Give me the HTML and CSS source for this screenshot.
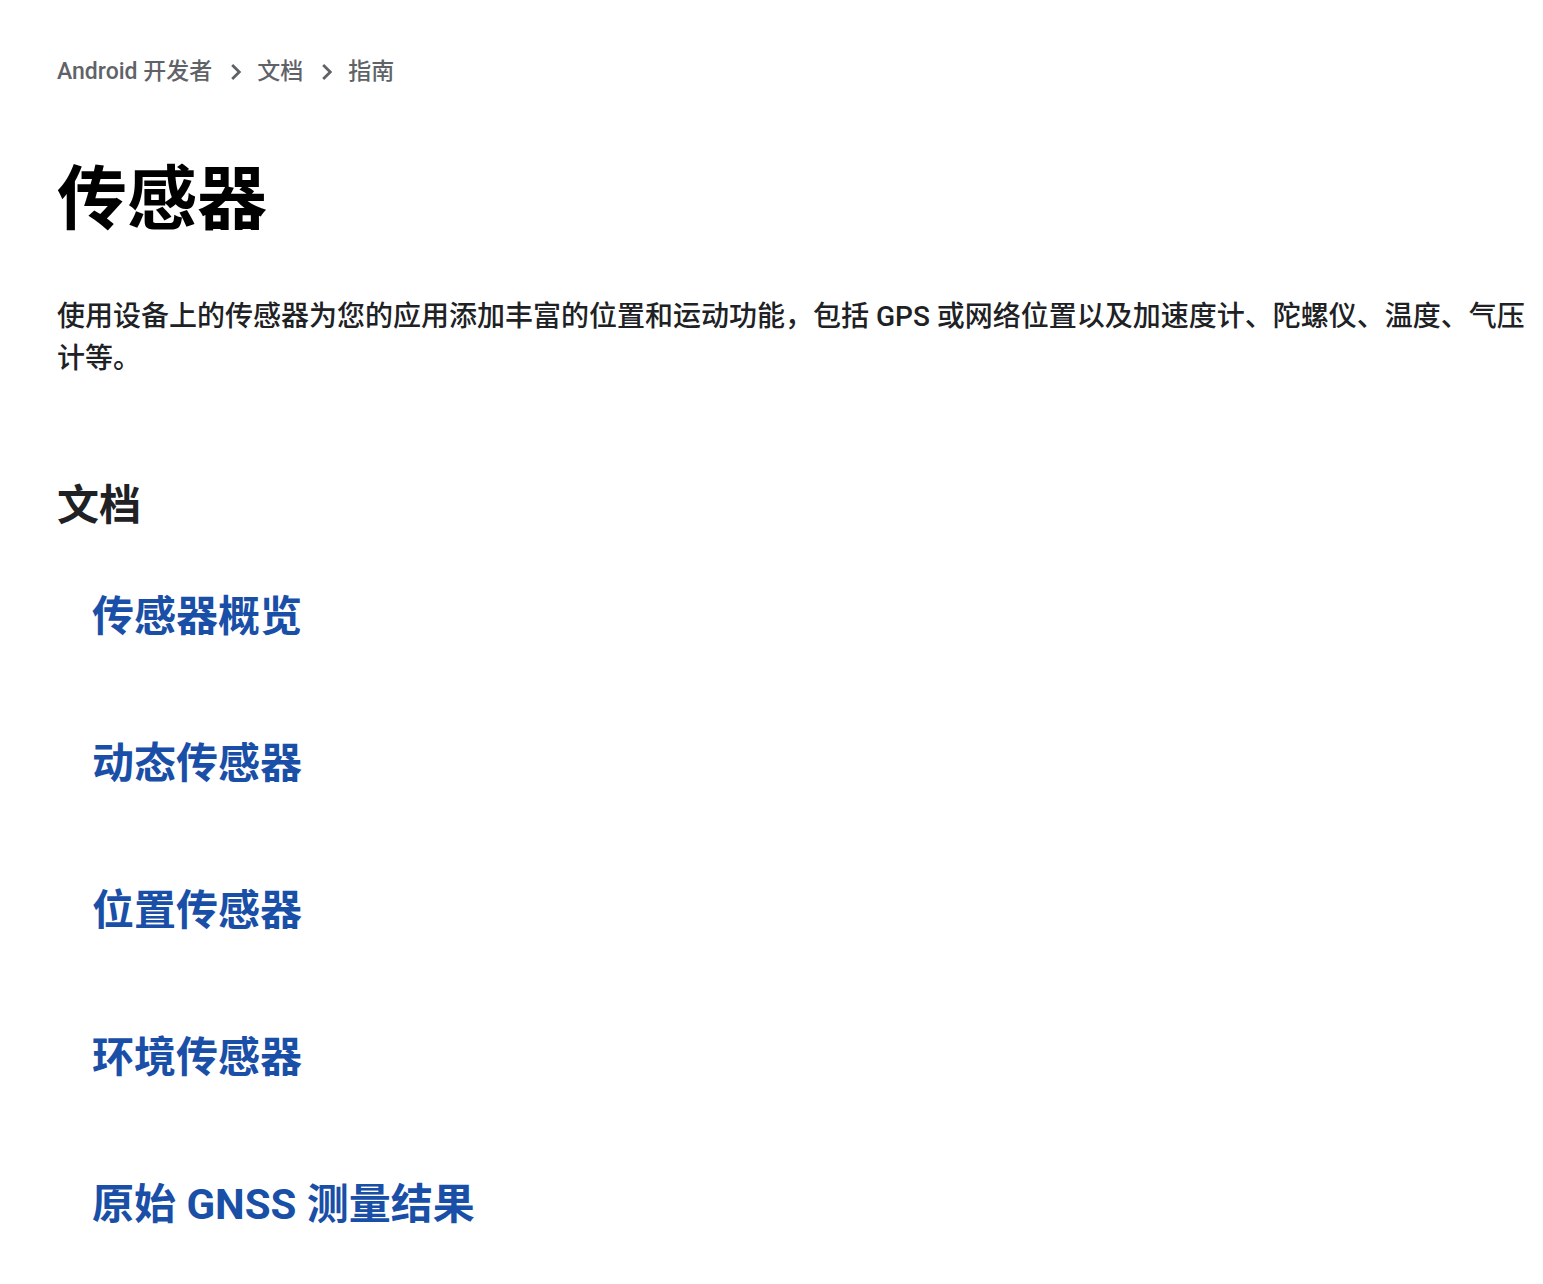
FILE: index.html
```html
<!DOCTYPE html>
<html lang="zh-CN">
<head>
  <meta charset="UTF-8">
  <title>传感器 | Android 开发者</title>
  <link rel="stylesheet" href="styles.css">
</head>
<body>
  <nav class="breadcrumb">
    <a href="#">Android 开发者</a>
    <svg class="chev" viewBox="0 0 24 24"><path d="M9.3 6.3 7.9 7.7 12.2 12l-4.3 4.3 1.4 1.4L15 12z"/></svg>
    <a href="#">文档</a>
    <svg class="chev" viewBox="0 0 24 24"><path d="M9.3 6.3 7.9 7.7 12.2 12l-4.3 4.3 1.4 1.4L15 12z"/></svg>
    <a href="#">指南</a>
  </nav>

  <h1 class="title">传感器</h1>

  <p class="intro">使用设备上的传感器为您的应用添加丰富的位置和运动功能，包括 GPS 或网络位置以及加速度计、陀螺仪、温度、气压计等。</p>

  <h2 class="section">文档</h2>

  <ul class="docs">
    <li><a href="#">传感器概览</a></li>
    <li><a href="#">动态传感器</a></li>
    <li><a href="#">位置传感器</a></li>
    <li><a href="#">环境传感器</a></li>
    <li><a href="#">原始 GNSS 测量结果</a></li>
  </ul>
</body>
</html>
```

FILE: styles.css
```css
* { margin: 0; padding: 0; box-sizing: border-box; }
body {
  font-family: Roboto, "Noto Sans CJK SC", sans-serif;
  background: #fff;
  color: #202124;
  padding: 55px 16px 40px 57px;
}
a { text-decoration: none; }

.breadcrumb {
  display: flex;
  align-items: center;
  font-size: 23px;
  font-weight: 500;
  line-height: 32px;
}
.breadcrumb a { color: #5f6368; }
.chev {
  fill: #5f6368;
  width: 34px;
  height: 34px;
  margin: 0 3px 0 8px;
}

.title {
  font-size: 70px;
  font-weight: 700;
  line-height: 1.2;
  color: #000;
  margin-top: 69px;
}

.intro {
  font-size: 28px;
  font-weight: 500;
  line-height: 42px;
  margin-top: 54px;
  color: #202124;
}

.section {
  font-size: 42px;
  font-weight: 700;
  line-height: 1.2;
  margin-top: 101px;
}

.docs { list-style: none; margin-top: 61px; padding-left: 35px; }
.docs li { height: 147px; }
.docs a {
  color: #1a4fa8;
  font-size: 42px;
  font-weight: 700;
  line-height: 1.2;
}
```
